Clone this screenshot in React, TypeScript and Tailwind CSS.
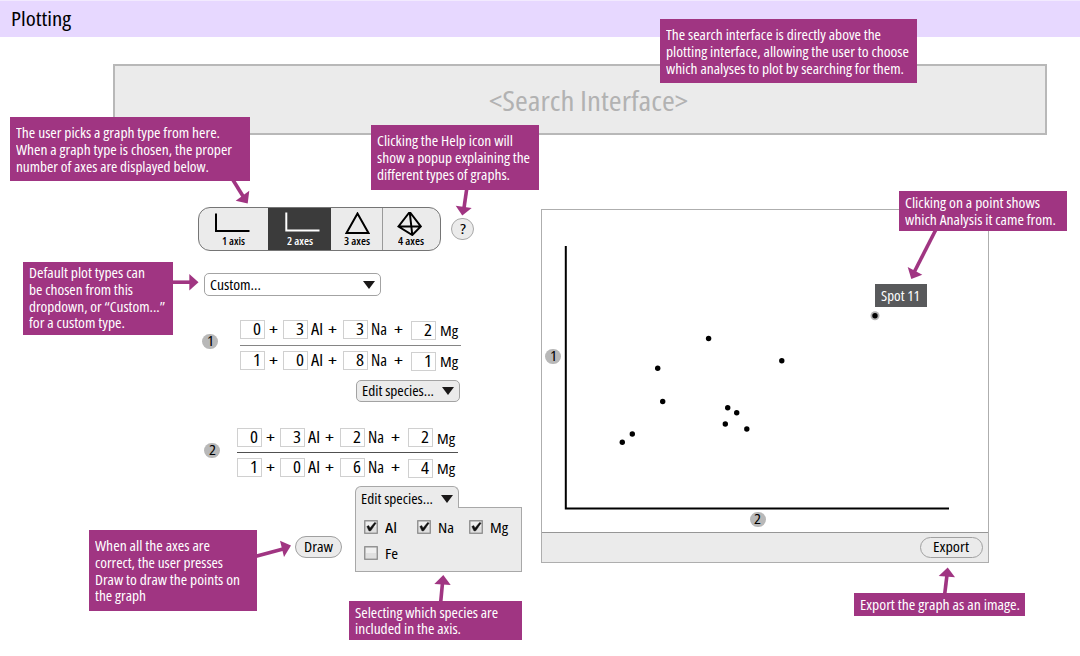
import { useLayoutEffect, useRef, useState, type ReactNode } from "react";
import clsx from "clsx";

/** A single line of text condensed horizontally to the given width. */
function Fit({ w, children, className }: { w: number; children: string; className?: string }) {
  const ref = useRef<HTMLSpanElement>(null);
  const [scale, setScale] = useState(1);
  useLayoutEffect(() => {
    if (ref.current) setScale(w / (ref.current.getBoundingClientRect().width / scale));
  }, [w, children]);
  return (
    <span className={clsx("block shrink-0 whitespace-nowrap text-left", className)} style={{ width: w }}>
      <span ref={ref} className="inline-block origin-left" style={{ transform: `scaleX(${scale})` }}>
        {children}
      </span>
    </span>
  );
}

type Note = { box: string; lines: [string, number][] };

const notes: Note[] = [
  {
    box: "left-[660px] top-[19px] w-[257px] h-[64px] pt-[7px]",
    lines: [
      ["The search interface is directly above the", 215],
      ["plotting interface, allowing the user to choose", 243],
      ["which analyses to plot by searching for them.", 238],
    ],
  },
  {
    box: "left-[10px] top-[117px] w-[240px] h-[64px] pt-[7px]",
    lines: [
      ["The user picks a graph type from here.", 204],
      ["When a graph type is chosen, the proper", 216],
      ["number of axes are displayed below.", 193],
    ],
  },
  {
    box: "left-[371px] top-[125px] w-[168px] h-[64.5px] pt-[7px]",
    lines: [
      ["Clicking the Help icon will", 136],
      ["show a popup explaining the", 153],
      ["different types of graphs.", 133],
    ],
  },
  {
    box: "left-[22.5px] top-[262px] w-[150.5px] h-[73px] pt-[2px]",
    lines: [
      ["Default plot types can", 116],
      ["be chosen from this", 104],
      ["dropdown, or “Custom...”", 136],
      ["for a custom type.", 96],
    ],
  },
  {
    box: "left-[89px] top-[530px] w-[168px] h-[81px] pt-[7px]",
    lines: [
      ["When all the axes are", 115],
      ["correct, the user presses", 128],
      ["Draw to draw the points on", 145],
      ["the graph", 51],
    ],
  },
  {
    box: "left-[349px] top-[601px] w-[173px] h-[39px] pt-[2.5px]",
    lines: [
      ["Selecting which species are", 143],
      ["included in the axis.", 106],
    ],
  },
  {
    box: "left-[899px] top-[191px] w-[168px] h-[39.5px] pt-[3px]",
    lines: [
      ["Clicking on a point shows", 135],
      ["which Analysis it came from.", 151],
    ],
  },
  {
    box: "left-[854px] top-[593px] w-[171px] h-[22.5px] pt-[3px]",
    lines: [["Export the graph as an image.", 160]],
  },
];

const arrows = [
  { shaft: "M233 180L243.5 197", head: "247.7,203.5 235.7,200.7 249.3,190.7" },
  { shaft: "M466.7 189L464 208", head: "462.3,215.5 455.7,205.7 471.7,208" },
  { shaft: "M172 282.2H191", head: "198.5,282.3 189.3,274 189.3,290.5" },
  { shaft: "M256 556.3L284 548.7", head: "291,545.5 280,540.7 284,557" },
  { shaft: "M440.7 602L442.5 583", head: "443.3,575 434.3,584 450.7,585" },
  { shaft: "M935.7 230L914.5 271.5", head: "911.3,279 907.7,267 922.3,274.7" },
  { shaft: "M944.7 594L947 575", head: "947.7,567.5 938.7,576 955,577.3" },
];

const points = [
  [622.3, 442.3], [632.3, 434], [662.7, 401.5], [657.7, 368.3], [708.6, 338.5], [781.8, 360.8],
  [727.7, 407.7], [736.7, 412.7], [725.3, 424], [746.8, 429],
];

function Badge({ n, className }: { n: string; className?: string }) {
  return (
    <span
      className={clsx(
        "flex h-[15px] w-4 shrink-0 items-center justify-center rounded-full bg-[#b8b8b8] pb-px text-[14px] font-medium leading-[14px]",
        className,
      )}
    >
      <Fit w={7}>{n}</Fit>
    </span>
  );
}

function Caret() {
  return (
    <svg viewBox="0 0 12 8" className="h-2 w-3 shrink-0">
      <path d="M0 0H12L6 8Z" fill="#1a1818" />
    </svg>
  );
}

function Value({ children, low }: { children: string; low?: boolean }) {
  return (
    <span
      className={clsx(
        "flex h-[19px] items-center justify-end border border-[#d0d0d0] pr-[3px]",
        low && "mt-px -mb-px",
      )}
    >
      <Fit w={8}>{children}</Fit>
    </span>
  );
}

function Plus() {
  return <Fit w={9} className="-ml-px justify-self-center text-[15px] font-medium">+</Fit>;
}

function Terms({ values, lowLast }: { values: string[]; lowLast?: boolean }) {
  return (
    <div className="grid h-[19px] grid-cols-[25px_18px_25px_14px_21px_25px_18px_25px_25px_25px] text-[16px] leading-[19px]">
      <Value>{values[0]}</Value>
      <Plus />
      <Value>{values[1]}</Value>
      <Fit w={12} className="ml-[2.5px]">Al</Fit>
      <Plus />
      <Value>{values[2]}</Value>
      <Fit w={16} className="ml-[2.5px]">Na</Fit>
      <Plus />
      <Value low={lowLast}>{values[3]}</Value>
      <Fit w={18} className="mt-px ml-[3.5px] text-[15px]">Mg</Fit>
    </div>
  );
}

function Fraction({ top, bottom, rule, low }: { top: string[]; bottom: string[]; rule: string; low?: boolean }) {
  return (
    <div className="w-[221px]">
      <Terms values={top} lowLast={low} />
      <div className={clsx("mb-[5px] h-[1.5px]", rule)} />
      <Terms values={bottom} lowLast />
    </div>
  );
}

function Segment({ label, w, active, className, children }: { label: string; w: number; active?: boolean; className: string; children: ReactNode }) {
  return (
    <button
      className={clsx("flex h-full flex-col items-center pt-1", active ? "bg-[#3b3b3b] text-white" : "text-black", className)}
    >
      <svg viewBox="0 0 40 24" className="-mb-px h-6 w-10 shrink-0" fill="none" stroke="currentColor" strokeWidth="2">
        {children}
      </svg>
      <Fit w={w} className="text-[10.5px] font-semibold leading-3">{label}</Fit>
    </button>
  );
}

function Check({ label, w, checked }: { label: string; w: number; checked?: boolean }) {
  return (
    <label className="flex h-4 items-center gap-[7px]">
      <svg viewBox="0 0 14 14" className="-ml-px h-3.5 w-3.5 shrink-0">
        <rect x="0.75" y="0.75" width="12.5" height="12.5" fill="#e0e0e0" stroke="#858585" strokeWidth="1.2" />
        <rect x="2" y="2" width="10" height="5" fill="#efefef" />
        {checked && <path d="M2.8 6.4L4.8 5.6L6 8L10.6 2.4L12.2 3L6.8 10.8L5 11Z" fill="#111" stroke="#111" strokeWidth="0.4" />}
      </svg>
      <Fit w={w} className="text-[15px] leading-4">{label}</Fit>
    </label>
  );
}

export default function App() {
  return (
    <div className="relative h-[656px] w-[1080px] overflow-hidden bg-white font-['Open_Sans',sans-serif] text-[15px] text-black font-stretch-condensed">
      <header className="h-[37px] border-t border-[#f2eafe] bg-[#e7d8ff] pl-[11px] text-[19px] leading-[37px]">
        <Fit w={60}>Plotting</Fit>
      </header>

      <section className="mt-[27px] ml-[113px] flex h-[71px] w-[934px] items-center justify-center border-2 border-[#b8b8b8] bg-[#ebebeb] pl-[17px] text-[28px] leading-[30px] text-[#b2b2b2]">
        <Fit w={199}>{"<Search Interface>"}</Fit>
      </section>

      <main className="flex items-start">
        <div className="w-[541px] shrink-0">
          <div className="ml-[198px] flex items-center pt-[72px]">
            <div className="flex h-11 w-[243px] overflow-hidden rounded-[12px] border-[1.5px] border-[#757575] bg-[#ebebeb]">
              <Segment label="1 axis" w={23} className="w-[69px]">
                <path d="M2 1.5V19H35.5" />
              </Segment>
              <Segment label="2 axes" w={26} active className="w-[63px]">
                <path d="M6.3 0.5V18.5H39.5" />
              </Segment>
              <Segment label="3 axes" w={26} className="w-[52px] border-r border-[#9a9a9a]">
                <path d="M20.5 1.5L9.5 21H31.5Z" />
              </Segment>
              <Segment label="4 axes" w={26} className="w-[55px]">
                <path d="M18.7 0L7.5 14.5L21.3 23L29.8 14.5ZM7.5 14.5H29.8M18.7 0L21.3 23" />
              </Segment>
            </div>
            <button className="ml-[10px] flex h-[22px] w-[23px] items-center justify-center rounded-full border border-[#a8a8a8] bg-[#ebebeb] text-[14px] font-medium leading-none">
              <Fit w={6}>?</Fit>
            </button>
          </div>

          <button className="mt-[22px] ml-[204px] flex h-[23px] w-[177px] items-center justify-between rounded-[5px] border border-[#a3a3a3] bg-white pr-[5px] pl-[5px] font-medium leading-[21px]">
            <Fit w={51}>Custom...</Fit>
            <Caret />
          </button>

          <div className="mt-6 flex pl-[202px]">
            <Badge n="1" className="mt-[14px]" />
            <div className="ml-[22px]">
              <Fraction top={["0", "3", "3", "2"]} bottom={["1", "0", "8", "1"]} rule="mt-[5.5px] bg-[#858585]" low />
            </div>
          </div>
          <button className="mt-[10px] ml-[356px] flex h-[22px] w-[104px] items-center justify-between rounded-[5px] border border-[#a3a3a3] bg-[#ebebeb] pr-[5px] pb-px pl-[5px] font-medium leading-[19px]">
            <Fit w={72}>Edit species...</Fit>
            <Caret />
          </button>

          <div className="mt-[26px] flex pl-[204px]">
            <Badge n="2" className="mt-[15px]" />
            <div className="ml-[17px]">
              <Fraction top={["0", "3", "2", "2"]} bottom={["1", "0", "6", "4"]} rule="mt-[4.5px] bg-[#505050]" />
            </div>
          </div>

          <div className="mt-[9px] flex items-start pl-[295px]">
            <button className="mt-[50px] flex h-[22px] w-[47px] items-center justify-center rounded-full border border-[#a0a0a0] bg-[#ebebeb] pr-px pb-[2px] font-medium leading-[18px]">
              <Fit w={29}>Draw</Fit>
            </button>
            <div className="ml-[13px]">
              <button className="relative -mb-px flex h-[22px] w-[104px] items-center justify-between rounded-t-[6px] border border-b-0 border-[#a8a8a8] bg-[#ebebeb] pt-[2px] pr-[5px] pl-[5px] font-medium leading-[19px]">
                <Fit w={72}>Edit species...</Fit>
                <Caret />
              </button>
              <div className="grid h-[65px] w-[167px] grid-cols-[53px_52px_50px] content-start gap-y-[10px] border border-[#a8a8a8] bg-[#ebebeb] pt-[11px] pl-[9px]">
                <Check label="Al" w={12} checked />
                <Check label="Na" w={16} checked />
                <Check label="Mg" w={18} checked />
                <Check label="Fe" w={13} />
              </div>
            </div>
          </div>
        </div>

        <div className="mt-[74px] w-[448px] border border-[#aeaeae]">
          <div className="relative h-[322px] bg-white">
            <svg viewBox="542 210 446 322" className="block h-[322px] w-[446px]">
              <path d="M565.8 246V508.5H949" fill="none" stroke="#000" strokeWidth="2" />
              {points.map(([x, y]) => (
                <circle key={`${x}-${y}`} cx={x} cy={y} r="2.7" />
              ))}
              <circle cx="875" cy="315.8" r="4.5" fill="#b5b5b5" />
              <circle cx="875" cy="315.8" r="2.7" />
            </svg>
            <Badge n="1" className="absolute top-[139px] left-[3px]" />
            <Badge n="2" className="absolute top-[302px] left-[207.5px]" />
            <div className="absolute top-[74px] left-[333px] h-[23px] w-[52px] bg-[#58595b] pl-[5.5px] font-medium leading-[23px] text-white">
              <Fit w={39}>Spot 11</Fit>
            </div>
          </div>
          <div className="flex h-[30px] items-center justify-end border-t border-[#969696] bg-[#ebebeb] pr-[5px]">
            <button className="flex h-[21px] w-[63px] items-center justify-center rounded-full border border-[#a0a0a0] pr-px pb-1 font-medium leading-[16px]">
              <Fit w={36}>Export</Fit>
            </button>
          </div>
        </div>
      </main>

      <svg viewBox="0 0 1080 656" className="pointer-events-none absolute inset-0 h-full w-full">
        {arrows.map((a) => (
          <g key={a.shaft}>
            <path d={a.shaft} stroke="#a03582" strokeWidth="3.6" />
            <polygon points={a.head} fill="#a03582" />
          </g>
        ))}
      </svg>

      {notes.map((n) => (
        <aside key={n.box} className={clsx("absolute bg-[#a03582] pl-[6px] font-medium leading-[16.75px] text-white", n.box)}>
          {n.lines.map(([text, w]) => (
            <Fit key={text} w={w}>{text}</Fit>
          ))}
        </aside>
      ))}
    </div>
  );
}
